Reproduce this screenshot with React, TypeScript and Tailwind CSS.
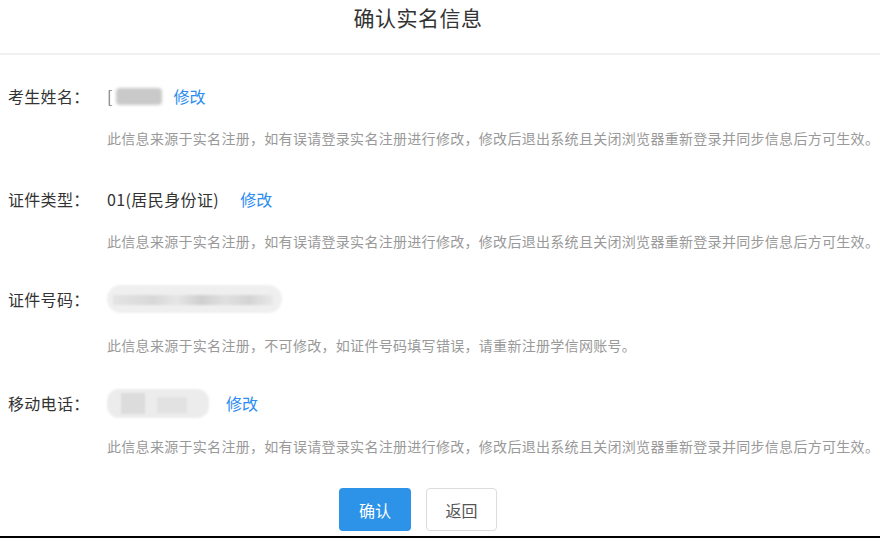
import React from 'react';

const HINT_EDIT =
  '此信息来源于实名注册，如有误请登录实名注册进行修改，修改后退出系统且关闭浏览器重新登录并同步信息后方可生效。';
const HINT_ID = '此信息来源于实名注册，不可修改，如证件号码填写错误，请重新注册学信网账号。';

function EditLink() {
  return <a className="text-[16px] text-[#2d8cf0] cursor-pointer">修改</a>;
}

function Field({
  label,
  children,
  hint,
  rowClass,
  hintClass,
}: {
  label: string;
  children: React.ReactNode;
  hint: string;
  rowClass: string;
  hintClass: string;
}) {
  return (
    <div className={rowClass}>
      <div className="flex h-10 items-center">
        <div className="w-[107px] shrink-0 pl-2 text-[16px] tracking-[0.3px] text-[#333]">{label}</div>
        <div className="flex items-center text-[16px] text-[#333]">{children}</div>
      </div>
      <div
        className={`${hintClass} pl-[107px] text-[14px] leading-[22px] tracking-[0.3px] text-[#999] whitespace-nowrap`}
      >
        {hint}
      </div>
    </div>
  );
}

export default function App() {
  return (
    <div
      className="flex h-[538px] w-[880px] flex-col overflow-hidden bg-white"
      style={{ fontFamily: '"Noto Sans CJK SC", "Noto Sans", sans-serif' }}
    >
      <header className="flex h-[55px] shrink-0 items-start justify-center border-b-2 border-[#f0f0f0] pr-[44px] pt-[2px]">
        <h1 className="text-[21px] leading-[30px] tracking-[0.5px] text-[#333]">确认实名信息</h1>
      </header>

      <Field label="考生姓名：" hint={HINT_EDIT} rowClass="pt-[21px]" hintClass="mt-[11px]">
        <span className="text-[#777]">[</span>
        <span className="ml-[4px] mr-[11px] h-[17px] w-[46px] rounded-sm bg-[#c9c9c9] blur-[1.5px]" />
        <EditLink />
      </Field>

      <Field label="证件类型：" hint={HINT_EDIT} rowClass="pt-[30px]" hintClass="mt-[11px]">
        <span className="mr-[21px] tracking-[0.4px]">01(居民身份证)</span>
        <EditLink />
      </Field>

      <Field label="证件号码：" hint={HINT_ID} rowClass="pt-[27px]" hintClass="mt-[15px]">
        <span className="relative h-[28px] w-[175px] rounded-full bg-[#efefef] blur-[1px]">
          <span className="absolute left-[6px] top-[10px] h-[10px] w-[160px] bg-[linear-gradient(90deg,#e4e4e4_0%,#d8d8d8_25%,#e6e6e6_40%,#cfcfcf_55%,#e0e0e0_70%,#d4d4d4_85%,#e8e8e8_100%)]" />
        </span>
      </Field>

      <Field label="移动电话：" hint={HINT_EDIT} rowClass="pt-[27px]" hintClass="mt-[12px]">
        <span className="relative mr-[17px] h-[29px] w-[102px] rounded-xl bg-[#ececec] blur-[1px]">
          <span className="absolute left-[14px] top-[4px] h-[21px] w-[24px] bg-[#dcdcdc]" />
          <span className="absolute left-[50px] top-[8px] h-[16px] w-[30px] bg-[#e2e2e2]" />
        </span>
        <EditLink />
      </Field>

      <div className="mt-[31px] flex justify-center gap-[15px] pr-[44px]">
        <button className="h-[43px] w-[72px] rounded bg-[#2d93e8] text-[16px] text-white">确认</button>
        <button className="h-[43px] w-[71px] rounded border border-[#dcdcdc] bg-white text-[16px] text-[#555]">
          返回
        </button>
      </div>

      <div className="mt-auto h-[2px] w-full bg-black" />
    </div>
  );
}
